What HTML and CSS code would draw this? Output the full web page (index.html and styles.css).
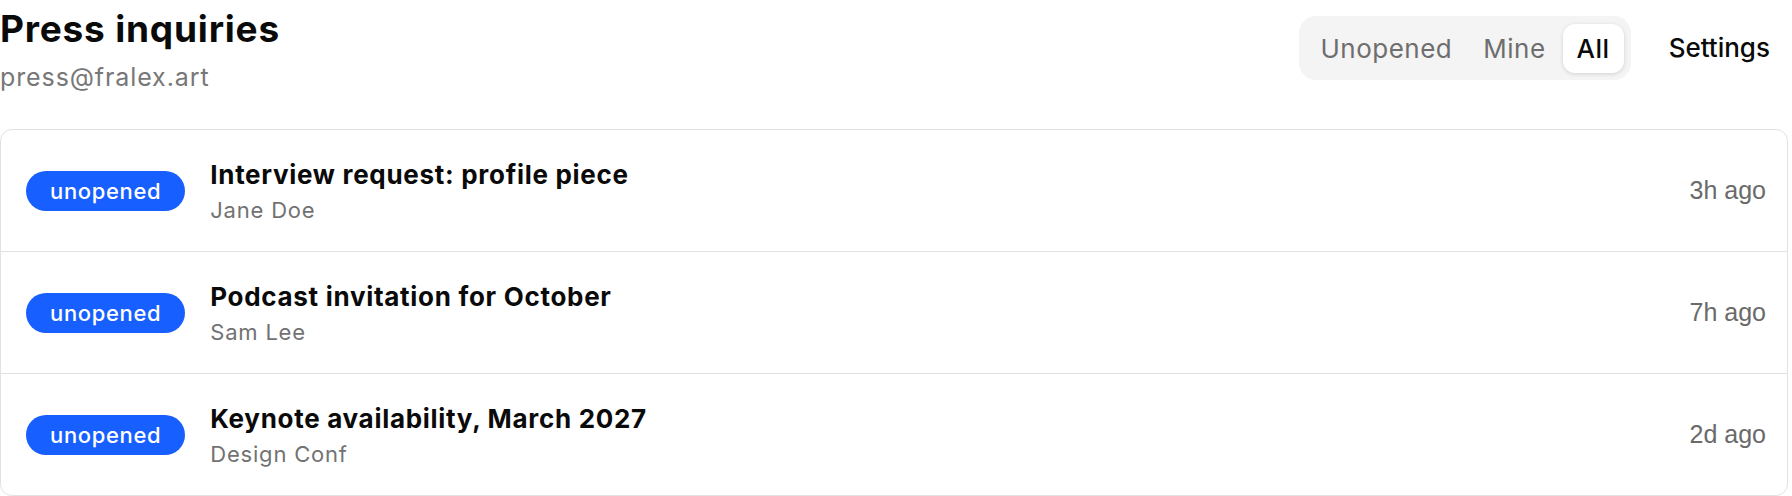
FILE: index.html
```html
<!DOCTYPE html>
<html lang="en">
<head>
<meta charset="utf-8">
<title>Press inquiries</title>
<link rel="stylesheet" href="styles.css">
</head>
<body>
<div class="page">
  <header class="header">
    <div class="heading">
      <h1 class="title">Press inquiries</h1>
      <div class="email">press@fralex.art</div>
    </div>
    <div class="actions">
      <nav class="segmented">
        <span class="seg">Unopened</span>
        <span class="seg">Mine</span>
        <span class="seg active">All</span>
      </nav>
      <span class="settings">Settings</span>
    </div>
  </header>
  <ul class="list">
    <li class="row">
      <span class="badge">unopened</span>
      <div class="info">
        <div class="subject">Interview request: profile piece</div>
        <div class="sender">Jane Doe</div>
      </div>
      <span class="time">3h ago</span>
    </li>
    <li class="row">
      <span class="badge">unopened</span>
      <div class="info">
        <div class="subject">Podcast invitation for October</div>
        <div class="sender">Sam Lee</div>
      </div>
      <span class="time">7h ago</span>
    </li>
    <li class="row">
      <span class="badge">unopened</span>
      <div class="info">
        <div class="subject">Keynote availability, March 2027</div>
        <div class="sender">Design Conf</div>
      </div>
      <span class="time">2d ago</span>
    </li>
  </ul>
</div>
</body>
</html>
```
FILE: styles.css
```css
* { box-sizing: border-box; }
body {
  margin: 0;
  background: #fff;
  font-family: Inter, "Liberation Sans", sans-serif;
  color: #0a0a0a;
}
.page {
  padding: 7px 4px 0 0;
}
.header {
  display: flex;
  justify-content: space-between;
  align-items: flex-start;
  height: 122px;
}
.heading {
  display: flex;
  flex-direction: column;
  gap: 11px;
}
.title {
  margin: 0;
  font-size: 37px;
  line-height: 44px;
  font-weight: 700;
  letter-spacing: 0.8px;
}
.email {
  font-size: 25px;
  line-height: 30px;
  color: #777;
  letter-spacing: 0.9px;
}
.actions {
  margin-top: 9px;
  display: flex;
  align-items: center;
  gap: 38px;
  margin-right: 18px;
}
.segmented {
  display: flex;
  align-items: center;
  gap: 3px;
  background: #f4f4f4;
  border-radius: 17px;
  padding: 8px 7px 7px 7px;
  height: 64px;
}
.seg {
  font-size: 26px;
  line-height: 49px;
  height: 49px;
  padding: 0 14px;
  color: #6e6e6e;
  letter-spacing: 0.5px;
  border-radius: 12px;
}
.seg.active {
  background: #fff;
  color: #0a0a0a;
  font-weight: 500;
  box-shadow: 0 1px 4px rgba(0, 0, 0, 0.14);
}
.settings {
  font-size: 26px;
  line-height: 32px;
  font-weight: 500;
  color: #0a0a0a;
}
.list {
  list-style: none;
  margin: 0;
  padding: 0;
  border: 1px solid #e2e2e2;
  border-radius: 12px;
  overflow: hidden;
}
.row {
  display: flex;
  align-items: center;
  gap: 25px;
  height: 122px;
  padding: 0 21px 0 25px;
  border-top: 1px solid #e2e2e2;
}
.row:first-child {
  border-top: none;
  height: 121px;
}
.badge {
  flex: none;
  background: #185fff;
  color: #fff;
  font-size: 22px;
  line-height: 40px;
  height: 40px;
  padding: 0 24px;
  border-radius: 20px;
  font-weight: 500;
  letter-spacing: 0.65px;
}
.info {
  flex: 1;
  display: flex;
  flex-direction: column;
  gap: 6px;
}
.subject {
  font-size: 26px;
  line-height: 32px;
  font-weight: 700;
  letter-spacing: 0.7px;
}
.sender {
  font-size: 22px;
  line-height: 26px;
  color: #727272;
  letter-spacing: 0.8px;
}
.time {
  font-family: "Liberation Sans", Arial, sans-serif;
  font-size: 25px;
  color: #6a6a6a;
}
```
